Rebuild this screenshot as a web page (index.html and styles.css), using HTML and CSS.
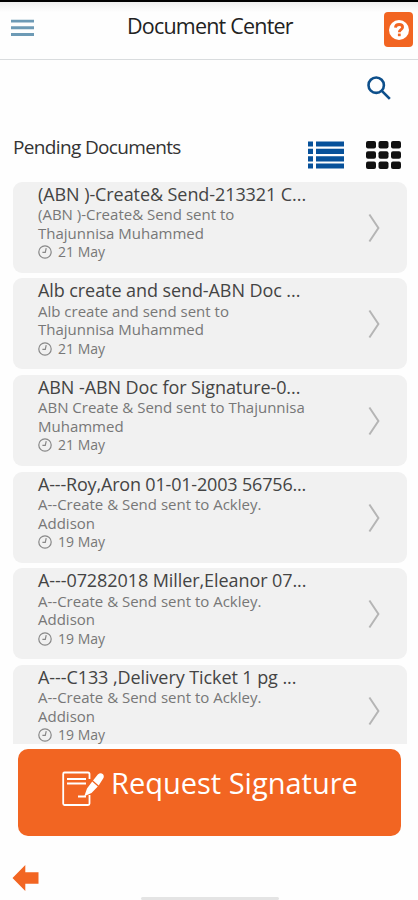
FILE: index.html
```html
<!DOCTYPE html>
<html lang="en">
<head>
  <meta charset="UTF-8">
  <meta name="viewport" content="width=device-width, initial-scale=1">
  <title>Document Center</title>
  <link rel="stylesheet" href="styles.css">
</head>
<body>
<svg class="symbols">
  <symbol id="clock" viewBox="0 0 14 14">
    <circle cx="7" cy="7" r="6.2"/>
    <path d="M8.2 3.2L7.3 7.4H4.4"/>
  </symbol>
  <symbol id="chevron" viewBox="0 0 12 30">
    <path d="M1.4 1.5L10.4 15L1.4 28.5"/>
  </symbol>
</svg>

<header class="header">
  <svg class="header__menu" viewBox="0 0 24 18">
    <path d="M0 1.8H24M0 8.8H24M0 15.8H24"/>
  </svg>
  <h1 class="header__title">Document Center</h1>
  <div class="help">
    <svg class="help__icon" viewBox="0 0 20 20">
      <circle cx="10" cy="10" r="10"/>
      <path d="M6.4 7.7C6.6 5.4 8.2 4.5 10.1 4.5C12.2 4.5 13.6 5.6 13.6 7.3C13.6 9.8 10.3 9.6 10.3 12.2"/>
      <path d="M10.3 13.6V16.2"/>
    </svg>
  </div>
</header>

<div class="search">
  <svg class="search__icon" viewBox="0 0 24 24">
    <circle cx="9.2" cy="9.2" r="7.7"/>
    <path d="M14.8 14.8L22.8 22.8"/>
  </svg>
</div>

<div class="toolbar">
  <h2 class="toolbar__title">Pending Documents</h2>
  <svg class="toolbar__list" viewBox="0 0 36 28">
    <path d="M0 3H5M0 10.3H5M0 17.8H5M0 25H5M8 3H36M8 10.3H36M8 17.8H36M8 25H36"/>
  </svg>
  <svg class="toolbar__grid" viewBox="0 0 35 28">
    <rect x="0" y="0" width="10" height="7.6" rx="2"/>
    <rect x="12.5" y="0" width="10" height="7.6" rx="2"/>
    <rect x="25" y="0" width="10" height="7.6" rx="2"/>
    <rect x="0" y="10.2" width="10" height="7.6" rx="2"/>
    <rect x="12.5" y="10.2" width="10" height="7.6" rx="2"/>
    <rect x="25" y="10.2" width="10" height="7.6" rx="2"/>
    <rect x="0" y="20.4" width="10" height="7.6" rx="2"/>
    <rect x="12.5" y="20.4" width="10" height="7.6" rx="2"/>
    <rect x="25" y="20.4" width="10" height="7.6" rx="2"/>
  </svg>
</div>

<main class="list">
  <div class="card">
    <div class="card__body">
      <h3 class="card__title">(ABN )-Create&amp; Send-213321 C...</h3>
      <p class="card__text">(ABN )-Create&amp; Send sent to<br>Thajunnisa Muhammed</p>
      <p class="card__date"><svg class="card__clock"><use href="#clock"/></svg>21 May</p>
    </div>
    <svg class="card__arrow"><use href="#chevron"/></svg>
  </div>
  <div class="card">
    <div class="card__body">
      <h3 class="card__title">Alb create and send-ABN Doc ...</h3>
      <p class="card__text">Alb create and send sent to<br>Thajunnisa Muhammed</p>
      <p class="card__date"><svg class="card__clock"><use href="#clock"/></svg>21 May</p>
    </div>
    <svg class="card__arrow"><use href="#chevron"/></svg>
  </div>
  <div class="card">
    <div class="card__body">
      <h3 class="card__title">ABN -ABN Doc for Signature-0...</h3>
      <p class="card__text">ABN Create &amp; Send sent to Thajunnisa<br>Muhammed</p>
      <p class="card__date"><svg class="card__clock"><use href="#clock"/></svg>21 May</p>
    </div>
    <svg class="card__arrow"><use href="#chevron"/></svg>
  </div>
  <div class="card">
    <div class="card__body">
      <h3 class="card__title card__title--tight">A---Roy,Aron 01-01-2003 56756...</h3>
      <p class="card__text">A--Create &amp; Send sent to Ackley.<br>Addison</p>
      <p class="card__date"><svg class="card__clock"><use href="#clock"/></svg>19 May</p>
    </div>
    <svg class="card__arrow"><use href="#chevron"/></svg>
  </div>
  <div class="card">
    <div class="card__body">
      <h3 class="card__title">A---07282018 Miller,Eleanor 07...</h3>
      <p class="card__text">A--Create &amp; Send sent to Ackley.<br>Addison</p>
      <p class="card__date"><svg class="card__clock"><use href="#clock"/></svg>19 May</p>
    </div>
    <svg class="card__arrow"><use href="#chevron"/></svg>
  </div>
  <div class="card">
    <div class="card__body">
      <h3 class="card__title">A---C133 ,Delivery Ticket 1 pg ...</h3>
      <p class="card__text">A--Create &amp; Send sent to Ackley.<br>Addison</p>
      <p class="card__date"><svg class="card__clock"><use href="#clock"/></svg>19 May</p>
    </div>
    <svg class="card__arrow"><use href="#chevron"/></svg>
  </div>
</main>

<button class="request">
  <svg class="request__icon" viewBox="0 0 42 36">
    <path class="request__line" d="M27.5 8V3Q27.5 1.5 26 1.5H2.5Q1.2 1.5 1.2 3V32.5Q1.2 34 2.5 34H26Q27.5 34 27.5 32.5V24"/>
    <path class="request__line" d="M5 8H24M5 12.5H24M16 25.5H24"/>
    <path class="request__pen" d="M22.3 25.3L25 17.5L30.2 10.5L35.8 15.5L29.5 22ZM31 9.6L35.8 3.6Q38.5 1 41 3.2Q42.6 5.4 41 7.8L36.7 14.5Z"/>
  </svg>
  <span class="request__label">Request Signature</span>
</button>

<footer class="footer">
  <svg class="footer__back" viewBox="0 0 26 26">
    <path d="M0 13L12.8 0V7.2H26V18.8H12.8V26Z"/>
  </svg>
  <div class="footer__home"></div>
</footer>
</body>
</html>
```
FILE: styles.css
```css
* {
  box-sizing: border-box;
}
body {
  display: flex;
  flex-direction: column;
  height: 900px;
  margin: 0;
  overflow: hidden;
  background-color: #fefefe;
  font-family: "Open Sans", "Noto Sans", sans-serif;
}
h1, h2, h3, p {
  margin: 0;
  font-weight: 400;
  white-space: nowrap;
}
svg {
  flex: none;
  fill: none;
}
.symbols {
  display: none;
}

/* header */
.header {
  display: flex;
  align-items: flex-start;
  height: 60px;
  padding: 9px 5px 0 11px;
  border-top: 2px solid #000;
  border-bottom: 1px solid #d9dcde;
  background: linear-gradient(#eee, #fefefe 10px);
}
.header__menu {
  width: 23px;
  height: 18px;
  margin-top: 8px;
  stroke: #6d9ab5;
  stroke-width: 3;
}
.header__title {
  flex: 1;
  padding-left: 93px;
  color: #222;
  font-size: 21.5px;
  line-height: 30px;
  letter-spacing: -0.8px;
}
.help {
  display: flex;
  align-items: center;
  justify-content: center;
  width: 29px;
  height: 35px;
  margin-top: 1px;
  border-radius: 4px;
  background-color: #f26522;
}
.help__icon {
  width: 20px;
  height: 20px;
}
.help__icon circle {
  fill: #fff;
}
.help__icon path {
  stroke: #f26522;
  stroke-width: 2.8;
}

.search {
  display: flex;
  justify-content: flex-end;
  height: 70px;
  padding: 16px 27px 0 0;
}
.search__icon {
  width: 24px;
  height: 24px;
  stroke: #0d4f8b;
  stroke-width: 2.6;
}

/* list toolbar */
.toolbar {
  display: flex;
  height: 51.7px;
  padding-left: 13px;
}
.toolbar__title {
  width: 295px;
  color: #333;
  font-size: 19px;
  line-height: 34px;
  letter-spacing: -0.65px;
}
.toolbar__list {
  width: 36px;
  height: 28px;
  margin: 11px 22px 0 0;
  stroke: #07519a;
  stroke-width: 5.2;
}
.toolbar__grid {
  width: 35px;
  height: 28px;
  margin-top: 11px;
  fill: #111;
}

/* documents */
.list {
  height: 562.3px;
  padding: 0 11px 0 13px;
  overflow: hidden;
}
.card {
  display: flex;
  height: 91px;
  margin-bottom: 5.65px;
  padding-left: 25px;
  border-radius: 9px;
  background-color: #f1f1f1;
}
.card__body {
  width: 330px;
}
.card__title {
  height: 23.4px;
  color: #444;
  font-size: 18px;
  line-height: 24px;
  letter-spacing: -0.08px;
}
.card__title--tight {
  letter-spacing: -0.18px;
}
.card__text {
  color: #777;
  font-size: 15px;
  line-height: 18.5px;
}
.card__date {
  display: flex;
  align-items: center;
  gap: 6px;
  color: #777;
  font-size: 14px;
  line-height: 20px;
}
.card__clock {
  width: 14px;
  height: 14px;
  stroke: #888;
  stroke-width: 1.2;
}
.card__arrow {
  width: 12px;
  height: 30px;
  margin-top: 31px;
  stroke: #b5b5b5;
  stroke-width: 2;
}

.request {
  display: flex;
  flex: none;
  height: 87px;
  margin: 5px 17px 0 18px;
  padding: 0 0 0 44px;
  border: 0;
  border-radius: 10px;
  background-color: #f26522;
  color: #fff;
  font-family: inherit;
}
.request__icon {
  width: 42px;
  height: 36px;
  margin: 22px 7px 0 0;
}
.request__line {
  stroke: #fff;
  stroke-width: 1.8;
}
.request__pen {
  fill: #fff;
}
.request__label {
  font-size: 29px;
  line-height: 40px;
  margin-top: 14px;
  white-space: nowrap;
}

/* bottom bar */
.footer {
  display: grid;
  grid-template-columns: 129px 138px;
  flex: 1;
  padding: 29px 0 0 12px;
}
.footer__back {
  width: 27px;
  height: 26px;
  fill: #f26522;
}
.footer__home {
  align-self: end;
  height: 3px;
  border-radius: 2px;
  background-color: #e4e4e4;
}
```
